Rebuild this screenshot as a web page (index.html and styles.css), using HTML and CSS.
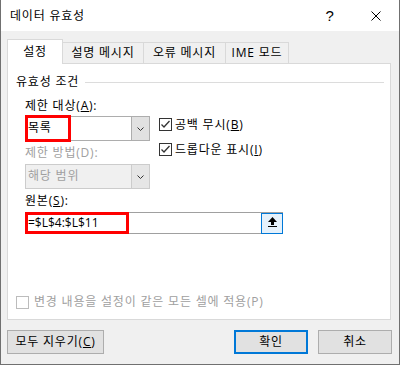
FILE: index.html
```html
<!DOCTYPE html>
<html lang="ko">
<head>
  <meta charset="UTF-8">
  <title>데이터 유효성</title>
  <link rel="stylesheet" href="styles.css">
</head>
<body>
<div class="dialog">
  <div class="titlebar">
    <span class="titlebar__title">데이터 유효성</span>
    <span class="titlebar__btn titlebar__btn--help">?</span>
    <span class="titlebar__btn">
      <svg class="titlebar__close" viewBox="0 0 10 10">
        <path d="M0.5,0.5L9.5,9.5M9.5,0.5L0.5,9.5" />
      </svg>
    </span>
  </div>

  <div class="dialog__body">
    <div class="tabs">
      <div class="tab tab--active">설정</div>
      <div class="tab tab--input">설명 메시지</div>
      <div class="tab tab--error">오류 메시지</div>
      <div class="tab tab--ime">IME 모드</div>
    </div>

    <div class="panel">
      <div class="group-title">유효성 조건</div>
      <div class="group-body">
        <div class="criteria">
          <div class="criteria__fields">
            <div class="label">제한 대상(<u>A</u>):</div>
            <div class="combo combo--target">
              <span class="combo__value">목록</span>
              <span class="combo__btn">
                <svg class="chevron" viewBox="0 0 7 4"><polyline points="0.5,0.5 3.5,3.5 6.5,0.5" /></svg>
              </span>
              <span class="mark mark--combo"></span>
            </div>
            <div class="label label--disabled label--method">제한 방법(D):</div>
            <div class="combo combo--disabled">
              <span class="combo__value">해당 범위</span>
              <span class="combo__btn">
                <svg class="chevron" viewBox="0 0 7 4"><polyline points="0.5,0.5 3.5,3.5 6.5,0.5" /></svg>
              </span>
            </div>
          </div>
          <div class="criteria__checks">
            <div class="check">
              <svg class="check__box" viewBox="0 0 13 13">
                <rect x="0.5" y="0.5" width="12" height="12" />
                <polyline points="2.5,6.5 5,9 10.5,3" />
              </svg>
              <span>공백 무시(<u>B</u>)</span>
            </div>
            <div class="check">
              <svg class="check__box" viewBox="0 0 13 13">
                <rect x="0.5" y="0.5" width="12" height="12" />
                <polyline points="2.5,6.5 5,9 10.5,3" />
              </svg>
              <span>드롭다운 표시(<u>I</u>)</span>
            </div>
          </div>
        </div>

        <div class="label label--source">원본(<u>S</u>):</div>
        <div class="source">
          <span class="source__value">=$L$4:$L$11</span>
          <span class="source__btn">
            <svg class="source__icon" viewBox="0 0 11 11">
              <polygon points="5.5,0 10,5 1,5" />
              <rect x="4" y="5" width="3" height="3" />
              <rect x="1" y="9" width="9" height="1" />
            </svg>
          </span>
          <span class="mark mark--source"></span>
        </div>
      </div>

      <div class="apply-all">
        <span class="apply-all__box"></span>
        <span>변경 내용을 설정이 같은 모든 셀에 적용(P)</span>
      </div>
    </div>

    <div class="actions">
      <button class="action action--clear">모두 지우기(<u>C</u>)</button>
      <button class="action action--ok">확인</button>
      <button class="action action--cancel">취소</button>
    </div>
  </div>
</div>
</body>
</html>
```

FILE: styles.css
```css
* {
  margin: 0;
  padding: 0;
  box-sizing: border-box;
}

:root {
  --color-face: #f0f0f0;
  --color-line: #d9d9d9;
  --color-edge: #adadad;
  --color-disabled: #a0a0a0;
  --color-blue: #0078d7;
  --color-mark: #ff0000;
}

body {
  font: 12px/16px "Open Sans", "Noto Sans CJK KR", sans-serif;
  letter-spacing: 0.8px;
  color: #000;
  background: #fff;
}

.dialog {
  width: 400px;
  height: 365px;
  border: 1px solid #707070;
  border-top: none;
  display: flex;
  flex-direction: column;
}

/* title bar */
.titlebar {
  height: 31px;
  background: #fff;
  display: flex;
  align-items: center;
}

.titlebar__title {
  flex: 1;
  padding-left: 9px;
}

.titlebar__btn {
  width: 46px;
  height: 31px;
  display: flex;
  align-items: center;
  justify-content: center;
}

.titlebar__btn--help {
  font: 15px/16px "Liberation Sans", sans-serif;
}

.titlebar__close {
  width: 10px;
  height: 10px;
  stroke: #000;
  stroke-width: 1;
  fill: none;
}

.dialog__body {
  flex: 1;
  background: var(--color-face);
  padding: 8px 7px 0 6px;
  display: flex;
  flex-direction: column;
}

/* tabs */
.tabs {
  height: 24px;
  display: flex;
  align-items: flex-end;
}

.tab {
  height: 21px;
  margin-left: -1px;
  border: 1px solid var(--color-line);
  border-bottom: none;
  background: var(--color-face);
  display: flex;
  align-items: center;
  justify-content: center;
}

.tab--active {
  width: 56px;
  height: 25px;
  margin-left: 0;
  margin-bottom: -1px;
  background: #fff;
  position: relative;
  z-index: 1;
}

.tab--input { width: 82px; }
.tab--error { width: 83px; }
.tab--ime { width: 64px; }

/* settings panel */
.panel {
  width: 384px;
  height: 257px;
  border: 1px solid var(--color-line);
  background: #fff;
  padding: 10px 6px 9px 8px;
  display: flex;
  flex-direction: column;
}

.group-title {
  display: flex;
  align-items: center;
  gap: 6px;
}

.group-title::after {
  content: "";
  flex: 1;
  height: 1px;
  background: #dcdcdc;
}

.group-body {
  padding-left: 9px;
}

.criteria {
  margin-top: 8px;
  display: flex;
}

.criteria__fields {
  width: 125px;
}

.criteria__checks {
  margin-left: 9px;
  padding-top: 20px;
  display: flex;
  flex-direction: column;
  gap: 12px;
}

.label--disabled {
  color: var(--color-disabled);
}

.label--method {
  margin-top: 4px;
}

.label--source {
  margin-top: 4px;
}

.combo {
  height: 25px;
  margin-top: 2px;
  border: 1px solid var(--color-edge);
  background: #fff;
  display: flex;
  position: relative;
}

.combo--disabled {
  margin-top: 3px;
  border-color: #cccccc;
  background: var(--color-face);
  color: var(--color-disabled);
}

.combo__value {
  flex: 1;
  padding-left: 2px;
  line-height: 22px;
}

.combo__btn {
  width: 18px;
  border-left: 1px solid var(--color-edge);
  background: #e1e1e1;
  display: flex;
  align-items: center;
  justify-content: center;
}

.combo--disabled .combo__btn {
  border-left-color: #cccccc;
  background: #e6e6e6;
}

.chevron {
  width: 7px;
  height: 4px;
  stroke: #333;
  stroke-width: 1;
  fill: none;
}

.check {
  height: 13px;
  display: flex;
  align-items: center;
  gap: 3px;
}

.check__box {
  width: 13px;
  height: 13px;
  flex: none;
}

.check__box rect {
  fill: #fff;
  stroke: #333;
}

.check__box polyline {
  fill: none;
  stroke: #333;
  stroke-width: 1.3;
}

.source {
  width: 258px;
  height: 22px;
  margin-top: 3px;
  border: 1px solid #a0a0a0;
  display: flex;
  align-items: flex-end;
  position: relative;
}

.source__value {
  flex: 1;
  align-self: center;
  padding-left: 2px;
  letter-spacing: 0;
}

.source__btn {
  width: 22px;
  height: 21px;
  margin: 0 -1px -1px 0;
  border: 1px solid var(--color-blue);
  background: #e5f1fb;
  display: flex;
  align-items: center;
  justify-content: center;
}

.source__icon {
  width: 11px;
  height: 11px;
  margin-bottom: 2px;
  fill: #000;
}

/* red annotation boxes drawn over the fields */
.mark {
  position: absolute;
  border: 3px solid var(--color-mark);
  pointer-events: none;
}

.mark--combo {
  left: -1px;
  top: -2px;
  width: 46px;
  height: 27px;
}

.mark--source {
  left: -1px;
  top: -1px;
  width: 104px;
  height: 22px;
}

.apply-all {
  margin-top: auto;
  height: 16px;
  display: flex;
  align-items: center;
  gap: 5px;
  color: var(--color-disabled);
}

.apply-all__box {
  width: 13px;
  height: 13px;
  border: 1px solid #bcbcbc;
  background: #fff;
}

/* bottom buttons */
.actions {
  margin-top: 10px;
  display: flex;
}

.action {
  height: 24px;
  border: 1px solid var(--color-edge);
  background: #e1e1e1;
  font: inherit;
  letter-spacing: inherit;
  color: #000;
}

.action--clear {
  width: 97px;
}

.action--ok {
  width: 74px;
  margin-left: auto;
  border: 2px solid var(--color-blue);
}

.action--cancel {
  width: 74px;
  margin-left: 10px;
}
```
